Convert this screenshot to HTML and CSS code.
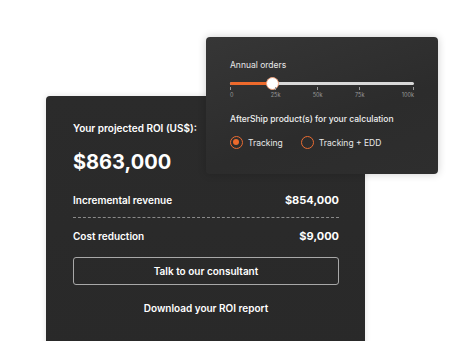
FILE: index.html
```html
<!DOCTYPE html>
<html>
<head>
<meta charset="utf-8">
<link rel="stylesheet" href="styles.css">
</head>
<body>
<div class="stage">
  <div class="roi-card">
    <div class="roi-title">Your projected ROI (US$):</div>
    <div class="roi-total">$863,000</div>
    <div class="roi-row roi-row-dashed">
      <span>Incremental revenue</span>
      <span class="roi-val">$854,000</span>
    </div>
    <div class="roi-row">
      <span>Cost reduction</span>
      <span class="roi-val">$9,000</span>
    </div>
    <button class="roi-btn">Talk to our consultant</button>
    <div class="roi-link">Download your ROI report</div>
  </div>

  <div class="calc-card">
    <div class="calc-label">Annual orders</div>
    <div class="slider">
      <div class="slider-track"><div class="slider-fill"></div></div>
      <div class="slider-thumb"></div>
      <div class="slider-ticks">
        <span class="tick"><i></i>0</span>
        <span class="tick"><i></i>25k</span>
        <span class="tick"><i></i>50k</span>
        <span class="tick"><i></i>75k</span>
        <span class="tick"><i></i>100k</span>
      </div>
    </div>
    <div class="calc-sub">AfterShip product(s) for your calculation</div>
    <div class="radios">
      <span class="radio radio-on"><span class="dot"></span>Tracking</span>
      <span class="radio"><span class="dot"></span>Tracking + EDD</span>
    </div>
  </div>
</div>
</body>
</html>
```

FILE: styles.css
```css
* { box-sizing: border-box; }
html, body { margin: 0; padding: 0; background: #ffffff; }
body {
  font-family: "Inter", "Open Sans", sans-serif;
  color: #ffffff;
  width: 474px;
  height: 341px;
  overflow: hidden;
}
.stage {
  position: relative;
  width: 474px;
  height: 341px;
  padding: 96px 0 0 46px;
}
.roi-card {
  width: 319px;
  height: 260px;
  background: linear-gradient(180deg, #2b2b2b 0%, #292929 100%);
  border-radius: 4px;
  padding: 25px 26px 0 27px;
  box-shadow: 0 0 6px rgba(0,0,0,0.12);
}
.roi-title {
  font-size: 10px;
  font-weight: 600;
  line-height: 14px;
}
.roi-total {
  font-size: 20px;
  font-weight: 700;
  line-height: 25px;
  margin-top: 15px;
}
.roi-row {
  display: flex;
  justify-content: space-between;
  align-items: center;
  font-size: 10px;
  font-weight: 600;
  line-height: 14px;
  height: 36px;
}
.roi-row-dashed {
  margin-top: 7px;
  border-bottom: 1px dashed #8a8a8a;
}
.roi-val { font-size: 11px; font-weight: 700; }
.roi-btn {
  display: block;
  width: 100%;
  height: 28px;
  margin-top: 3px;
  background: transparent;
  border: 1px solid #a8a8a8;
  border-radius: 3px;
  color: #ffffff;
  font-family: inherit;
  font-size: 10px;
  font-weight: 600;
}
.roi-link {
  text-align: center;
  font-size: 10px;
  font-weight: 600;
  margin-top: 17px;
}

.calc-card {
  position: absolute;
  left: 206px;
  top: 37px;
  width: 232px;
  height: 137px;
  border-radius: 4px;
  background: linear-gradient(160deg, #363636 0%, #2c2c2c 60%, #2e2e2e 100%);
  box-shadow: 0 0 8px rgba(0,0,0,0.2);
  padding: 22px 24px 0 24px;
}
.calc-label {
  font-size: 8.5px;
  line-height: 12px;
  color: #e8e8e8;
}
.slider {
  position: relative;
  margin-top: 6px;
  height: 20px;
}
.slider-track {
  position: absolute;
  left: 0; right: 0; top: 5px;
  height: 3px;
  background: #d9d9d9;
  border-radius: 2px;
}
.slider-fill {
  width: 42px;
  height: 3px;
  background: #ee6a2c;
  border-radius: 2px;
}
.slider-thumb {
  position: absolute;
  left: 36px;
  top: 0;
  width: 13px;
  height: 13px;
  border-radius: 50%;
  background: #ffffff;
  border: 1.5px solid #f2a37c;
}
.slider-ticks {
  position: absolute;
  left: 0; right: 0; top: 10px;
  display: flex;
  justify-content: space-between;
}
.tick {
  display: flex;
  flex-direction: column;
  align-items: center;
  font-size: 5.5px;
  line-height: 7px;
  color: #9a9a9a;
  width: 0;
  white-space: nowrap;
}
.tick:first-child { align-items: flex-start; width: auto; }
.tick:last-child { align-items: flex-end; width: auto; }
.tick i {
  display: block;
  width: 1px;
  height: 3px;
  background: #9a9a9a;
  margin-bottom: 2px;
}
.calc-sub {
  margin-top: 16px;
  font-size: 8.5px;
  font-weight: 500;
  line-height: 12px;
  color: #f0f0f0;
}
.radios {
  display: flex;
  gap: 18px;
  margin-top: 11px;
}
.radio {
  display: flex;
  align-items: center;
  gap: 5px;
  font-size: 8.5px;
  color: #e8e8e8;
}
.dot {
  width: 13px;
  height: 13px;
  border-radius: 50%;
  border: 1.5px solid #ea6c32;
  position: relative;
}
.radio-on .dot::after {
  content: "";
  position: absolute;
  left: 2px; top: 2px;
  width: 6px; height: 6px;
  border-radius: 50%;
  background: #ee6a2c;
}
```
